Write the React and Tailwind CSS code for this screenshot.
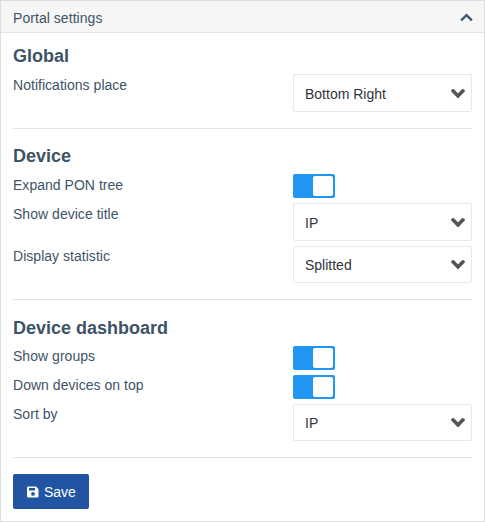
import React from "react";

function Arrow({ tall }) {
  return (
    <svg className={`h-[12px] w-[14px] ${tall ? "mt-[2px]" : "mt-px"}`} viewBox="0 0 14 12" fill="none">
      <path d="M2 2.8 L7 8 L12 2.8" stroke="#555" strokeWidth="3.6" strokeLinecap="round" />
    </svg>
  );
}

function Select({ value, tall }) {
  return (
    <button
      className={`flex w-[179px] items-center justify-between rounded-[2px] border border-[#e6e9eb] bg-white pr-[6px] pl-[11px] text-[14px] text-[#2f353b] ${tall ? "h-[38px]" : "h-[37px]"}`}
    >
      <span className="pt-[2px]">{value}</span>
      <Arrow tall={tall} />
    </button>
  );
}

function Toggle() {
  return (
    <button className="flex h-6 w-[42px] items-center justify-end rounded-[2px] bg-[#2196f3] pr-[2px]">
      <span className="h-5 w-5 rounded-[2px] bg-white" />
    </button>
  );
}

function Row({ label, raised, children }) {
  return (
    <div className="flex items-start">
      <span
        className={`w-[280px] text-[14px] leading-[20px] tracking-[0.03px] ${raised ? "pt-0" : "pt-px"}`}
      >
        {label}
      </span>
      {children}
    </div>
  );
}

function Section({ title, className, children }) {
  return (
    <section className={`border-b border-[#e2e4e5] pb-4 ${className}`}>
      <h2 className="mb-[5px] text-[18px] leading-[26px] font-bold">{title}</h2>
      <div className="flex flex-col gap-[5px]">{children}</div>
    </section>
  );
}

export default function App() {
  return (
    <div className="h-[522px] w-[485px] border border-[#dcdddd] bg-white font-['Liberation_Sans',Arial,sans-serif] text-[#3e5367]">
      <header className="flex h-8 items-center justify-between border-b border-[#e2e3e3] bg-[#f6f6f6] pr-[11px] pl-3 text-[14px]">
        <span className="pt-[3px] tracking-[0.05px]">Portal settings</span>
        <svg className="mt-[2px] h-[9px] w-[13px]" viewBox="0 0 13 9" fill="none">
          <path d="M1.1 7.4 L6.5 2.1 L11.9 7.4" stroke="#3e5873" strokeWidth="2.4" />
        </svg>
      </header>
      <main className="px-3">
        <Section title="Global" className="pt-[10px]">
          <Row label="Notifications place"><Select value="Bottom Right" tall /></Row>
        </Section>
        <Section title="Device" className="pt-[14px]">
          <Row label="Expand PON tree"><Toggle /></Row>
          <Row label="Show device title"><Select value="IP" tall /></Row>
          <Row label="Display statistic" raised><Select value="Splitted" /></Row>
        </Section>
        <Section title="Device dashboard" className="pt-[15px]">
          <Row label="Show groups" raised><Toggle /></Row>
          <Row label="Down devices on top" raised><Toggle /></Row>
          <Row label="Sort by" raised><Select value="IP" /></Row>
        </Section>
        <button className="mt-4 flex h-[35px] w-[76px] items-center rounded-[2px] bg-[#2155a4] pl-[14px] text-[14px] text-white">
          <svg className="mr-[5px] h-3 w-3" viewBox="0 0 12 12">
            <path
              fill="currentColor"
              fillRule="evenodd"
              d="M1.3 .5H9l2.5 2.5v7.2A1.3 1.3 0 0 1 10.2 11.5H1.3A1.3 1.3 0 0 1 0 10.2V1.8A1.3 1.3 0 0 1 1.3 .5ZM2 2v2.5h6V2ZM6 6a1.9 1.9 0 1 0 0 3.8A1.9 1.9 0 0 0 6 6Z"
            />
          </svg>
          <span className="pt-[2px]">Save</span>
        </button>
      </main>
    </div>
  );
}
